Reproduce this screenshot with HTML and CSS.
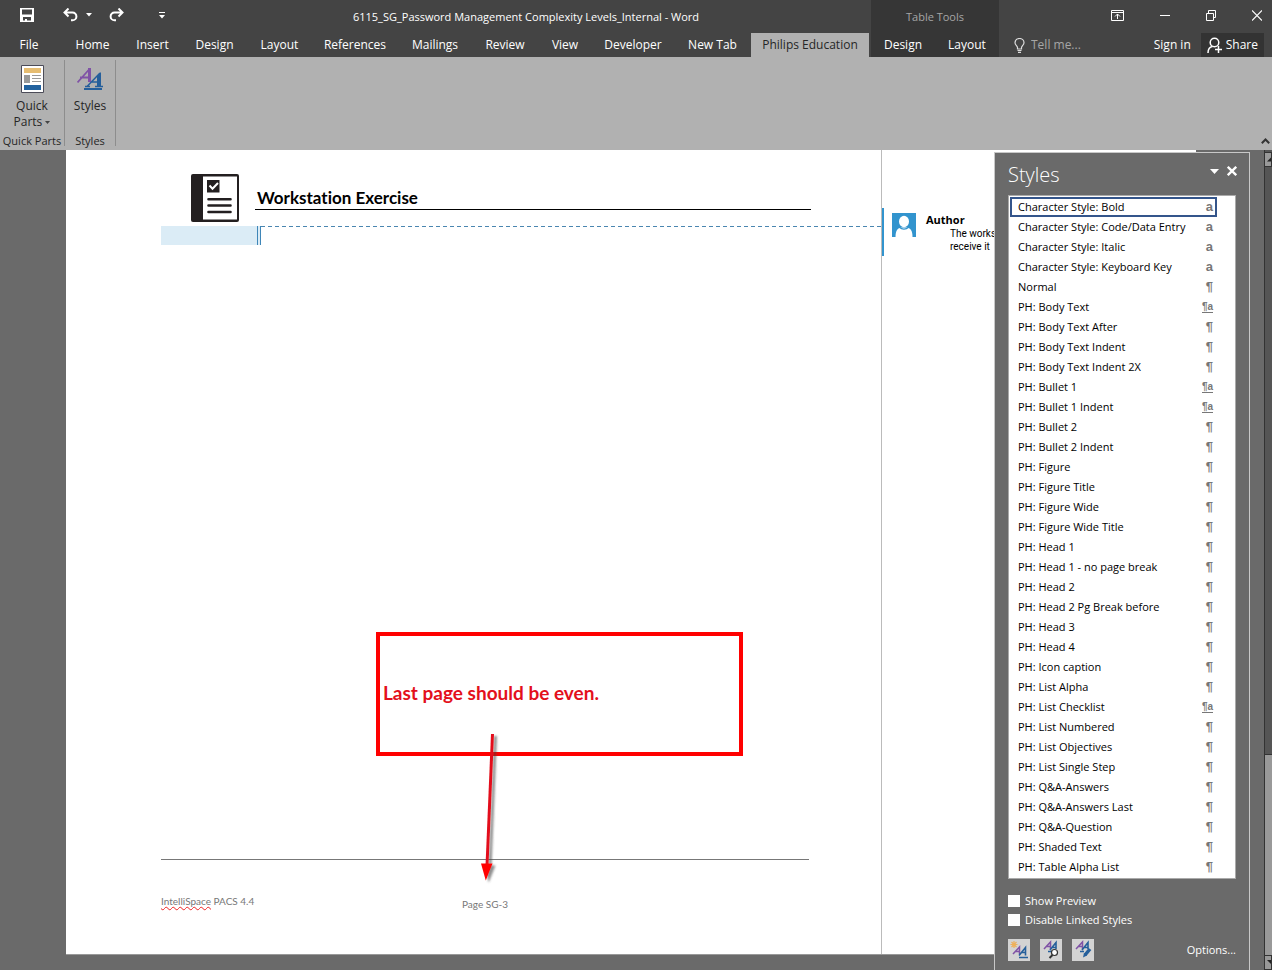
FILE: index.html
```html
<!DOCTYPE html>
<html lang="en">
<head>
<meta charset="utf-8">
<title>6115_SG_Password Management Complexity Levels_Internal - Word</title>
<link rel="stylesheet" href="styles.css">
</head>
<body>
<header class="chrome">
  <div class="chrome-main">
    <div class="titlebar">
      <div class="quick-access">
        <button class="icon-btn" aria-label="Save"><svg width="14" height="14" viewBox="0 0 14 14"><path fill="#fff" fill-rule="evenodd" d="M0 0h14v14H0zM2 1.500v5h10v-5zM3 9v3.500h2V11h2v1.500h4V9z"/></svg></button>
        <button class="icon-btn" aria-label="Undo"><svg width="15" height="14" viewBox="0 0 15 14"><path fill="none" stroke="#fff" stroke-width="2" d="M5.500 .5L1.500 4.500l4 4M2 4.500h7.500a3.800 3.800 0 0 1 0 7.800H8"/></svg></button>
        <button class="icon-btn" aria-label="Undo history"><svg width="6" height="4" viewBox="0 0 6 4"><path fill="#fff" d="M0 0h6L3 3.500z"/></svg></button>
        <button class="icon-btn redo" aria-label="Redo"><svg width="15" height="14" viewBox="0 0 15 14"><path fill="none" stroke="#fff" stroke-width="2" d="M9.500 .5l4 4-4 4M13 4.500H5.500a3.800 3.800 0 0 0 0 7.800H7"/></svg></button>
        <button class="icon-btn customize" aria-label="Customize toolbar"><svg width="6" height="7" viewBox="0 0 6 7"><path fill="#fff" d="M0 0h6v1H0zM0 3h6L3 6.500z"/></svg></button>
      </div>
      <h1 class="doc-title">6115_SG_Password Management Complexity Levels_Internal - Word</h1>
    </div>
    <nav class="tabs">
      <button class="tab file">File</button><button class="tab">Home</button><button class="tab">Insert</button><button class="tab">Design</button><button class="tab">Layout</button><button class="tab">References</button><button class="tab">Mailings</button><button class="tab">Review</button><button class="tab">View</button><button class="tab">Developer</button><button class="tab">New Tab</button><button class="tab active">Philips Education</button>
    </nav>
  </div>
  <div class="context-tools">
    <div class="context-title">Table Tools</div>
    <div class="context-tabs"><button class="tab">Design</button><button class="tab">Layout</button></div>
  </div>
  <div class="chrome-end">
    <div class="window-controls">
      <button class="icon-btn" aria-label="Ribbon display options"><svg width="13" height="11" viewBox="0 0 13 11"><path fill="none" stroke="#fff" d="M.5 .5h12v10H.5zM.5 2.500h12M6.500 9V4M4 6.500L6.500 4 9 6.500"/></svg></button>
      <button class="icon-btn" aria-label="Minimize"><svg width="10" height="11" viewBox="0 0 10 11"><path stroke="#fff" d="M0 5.500h10"/></svg></button>
      <button class="icon-btn" aria-label="Restore"><svg width="10" height="11" viewBox="0 0 10 11"><path fill="none" stroke="#fff" d="M.5 3.500h7v7h-7zM2.500 3V.5h7v7H8"/></svg></button>
      <button class="icon-btn" aria-label="Close"><svg width="10" height="11" viewBox="0 0 10 11"><path stroke="#fff" stroke-width="1.200" d="M0 .5l10 10M10 .5l-10 10"/></svg></button>
    </div>
    <div class="account">
      <label class="tell"><svg width="11" height="15" viewBox="0 0 11 15"><path fill="none" stroke="#ddd" stroke-width="1.200" d="M3.500 11V9.500C3.500 8 1 7 1 4.700a4.500 4.200 0 0 1 9 0C10 7 7.500 8 7.500 9.500V11zM3.500 12.500h4M4 14.300h3"/></svg><input class="tell-input" placeholder="Tell me..." aria-label="Tell me"></label>
      <button class="sign-in">Sign in</button>
      <button class="share"><svg width="16" height="17" viewBox="0 0 16 17"><circle cx="7.500" cy="5.500" r="4.300" fill="none" stroke="#fff" stroke-width="1.500"/><path fill="none" stroke="#fff" stroke-width="1.500" d="M1 16c0-3.500 1.500-6 4.500-6.500M11.500 9v7M8 12.500h7"/></svg>Share</button>
    </div>
  </div>
</header>

<section class="ribbon">
  <div class="group parts">
    <button class="big-btn">
      <svg width="23" height="28" viewBox="0 0 23 28"><path fill="#fff" stroke="#4c4c58" d="M.5 .5h22v27H.5z"/><path fill="#e6bd72" d="M3 3h17v5H3z"/><path fill="#999" d="M3 10h6v8H3z"/><path stroke="#999" d="M11 10.500h9M11 13.500h9M11 16.500h9"/><path fill="#22629f" d="M3 20h17v5H3z"/></svg>
      <span>Quick<br>Parts <svg width="5" height="3" viewBox="0 0 5 3" class="caret"><path fill="#444" d="M0 0h5L2.500 3z"/></svg></span>
    </button>
    <div class="group-label">Quick Parts</div>
  </div>
  <div class="group">
    <button class="big-btn">
      <svg width="26" height="28" viewBox="0 0 26 28"><path fill="none" stroke="#8053a6" stroke-width="1.800" d="M.5 17.500L12.500 4M3 12.500h9"/><path fill="none" stroke="#8053a6" stroke-width="3" d="M12.500 3v14"/><path fill="none" stroke="#255f9b" stroke-width="1.500" d="M8 21.500h5M10 21.500L23 8M14 17h8M18 21.500h8"/><path fill="#255f9b" d="M20 11l4-4v14h-4zM7 23h18v2H7z"/></svg>
      <span>Styles</span>
    </button>
    <div class="group-label">Styles</div>
  </div>
  <button class="collapse" aria-label="Collapse ribbon"><svg width="9" height="6" viewBox="0 0 9 6"><path fill="none" stroke="#333" stroke-width="2" d="M.8 5.200l3.700-3.700 3.700 3.700"/></svg></button>
</section>

<main class="workspace">
  <div class="canvas">
    <article class="page">
      <div class="page-body">
        <div class="heading">
          <svg width="48" height="48" viewBox="0 0 48 48"><rect width="48" height="48" rx="2" fill="#231f20"/><path fill="#fff" d="M12 2.500h34v43H12z"/><path fill="#231f20" d="M16 6h12.500v12.500H16z"/><path fill="none" stroke="#fff" stroke-width="2" d="M18.500 11.500l3 3.200L27 9"/><path stroke="#231f20" stroke-width="2.600" stroke-linecap="round" d="M17.500 25.200h22M17.500 31.500h22M17.500 38h22"/></svg>
          <h2 class="heading-text">Workstation Exercise</h2>
        </div>
        <div class="table-row"><div class="shaded"></div><div class="leader"></div></div>
        <footer class="page-footer"><span><span class="misspelt">IntelliSpace</span> PACS 4.4</span><span class="page-number">Page SG-3</span></footer>
        <div class="callout">Last page should be even.</div>
        <svg class="arrow" width="30" height="156" viewBox="0 0 30 156"><defs><filter id="soft" x="-50%" y="-10%" width="200%" height="120%"><feDropShadow dx="3" dy="2" stdDeviation="1.300" flood-color="#444" flood-opacity=".6"/></filter></defs><g filter="url(#soft)"><path stroke="#e3101c" stroke-width="3" d="M16.500 4L11 136"/><path fill="#f00" d="M5 133.500h11.500L9.800 150.500z"/></g></svg>
      </div>
      <aside class="comments">
        <div class="comment">
          <svg class="avatar" width="24" height="24" viewBox="0 0 24 24"><path fill="#3294ce" d="M0 0h24v24H0z"/><ellipse cx="12" cy="8.500" rx="5" ry="5.700" fill="#fff"/><path fill="#fff" d="M3.500 24c0-6 2-9.500 6-9.500h5c4 0 6 3.500 6 9.500z"/><path fill="none" stroke="#3294ce" stroke-width="1.300" d="M7 14c3 2.500 7 2.500 10 0"/></svg>
          <div><div class="author">Author</div><p class="comment-text">The works<br>receive it</p></div>
        </div>
      </aside>
    </article>
  </div>
  <div class="scrollbar"><button class="scroll-btn" aria-label="Scroll up"><svg width="8" height="5" viewBox="0 0 8 5"><path fill="#222" d="M2 4.500L6.500 0 11 4.500z"/></svg></button><div class="track"></div><div class="thumb"></div><button class="scroll-btn" aria-label="Scroll down"><svg width="8" height="5" viewBox="0 0 8 5"><path fill="#222" d="M2 0h9L6.500 4.500z"/></svg></button></div>

  <aside class="styles-pane">
    <div class="pane-head"><h2 class="pane-title">Styles</h2>
      <button class="icon-btn" aria-label="Pane options"><svg width="9" height="5" viewBox="0 0 9 5"><path fill="#fff" d="M0 0h9L4.500 5z"/></svg></button>
      <button class="icon-btn" aria-label="Close pane"><svg width="10" height="10" viewBox="0 0 10 10"><path stroke="#fff" stroke-width="2.300" d="M.8 .8l8.400 8.400M9.200 .8L.8 9.200"/></svg></button>
    </div>
    <ul class="style-list">
      <li><button class="style selected">Character Style: Bold<b>a</b></button></li>
      <li><button class="style">Character Style: Code/Data Entry<b>a</b></button></li>
      <li><button class="style">Character Style: Italic<b>a</b></button></li>
      <li><button class="style">Character Style: Keyboard Key<b>a</b></button></li>
      <li><button class="style">Normal<b>¶</b></button></li>
      <li><button class="style">PH: Body Text<b class="linked">¶a</b></button></li>
      <li><button class="style">PH: Body Text After<b>¶</b></button></li>
      <li><button class="style">PH: Body Text Indent<b>¶</b></button></li>
      <li><button class="style">PH: Body Text Indent 2X<b>¶</b></button></li>
      <li><button class="style">PH: Bullet 1<b class="linked">¶a</b></button></li>
      <li><button class="style">PH: Bullet 1 Indent<b class="linked">¶a</b></button></li>
      <li><button class="style">PH: Bullet 2<b>¶</b></button></li>
      <li><button class="style">PH: Bullet 2 Indent<b>¶</b></button></li>
      <li><button class="style">PH: Figure<b>¶</b></button></li>
      <li><button class="style">PH: Figure Title<b>¶</b></button></li>
      <li><button class="style">PH: Figure Wide<b>¶</b></button></li>
      <li><button class="style">PH: Figure Wide Title<b>¶</b></button></li>
      <li><button class="style">PH: Head 1<b>¶</b></button></li>
      <li><button class="style">PH: Head 1 - no page break<b>¶</b></button></li>
      <li><button class="style">PH: Head 2<b>¶</b></button></li>
      <li><button class="style">PH: Head 2 Pg Break before<b>¶</b></button></li>
      <li><button class="style">PH: Head 3<b>¶</b></button></li>
      <li><button class="style">PH: Head 4<b>¶</b></button></li>
      <li><button class="style">PH: Icon caption<b>¶</b></button></li>
      <li><button class="style">PH: List Alpha<b>¶</b></button></li>
      <li><button class="style">PH: List Checklist<b class="linked">¶a</b></button></li>
      <li><button class="style">PH: List Numbered<b>¶</b></button></li>
      <li><button class="style">PH: List Objectives<b>¶</b></button></li>
      <li><button class="style">PH: List Single Step<b>¶</b></button></li>
      <li><button class="style">PH: Q&amp;A-Answers<b>¶</b></button></li>
      <li><button class="style">PH: Q&amp;A-Answers Last<b>¶</b></button></li>
      <li><button class="style">PH: Q&amp;A-Question<b>¶</b></button></li>
      <li><button class="style">PH: Shaded Text<b>¶</b></button></li>
      <li><button class="style">PH: Table Alpha List<b>¶</b></button></li>
    </ul>
    <div class="checks">
      <label class="check"><input type="checkbox">Show Preview</label>
      <label class="check"><input type="checkbox">Disable Linked Styles</label>
    </div>
    <div class="pane-actions">
      <button class="tool" aria-label="New style"><svg width="20" height="20" viewBox="0 0 20 20"><path stroke="#eeb05a" stroke-width="1.200" d="M5 1v7M1.500 4.500h7M2.500 2l5 5M7.500 2l-5 5"/><path fill="none" stroke="#8053a6" stroke-width="1.500" d="M4 14l6.500-7v7M6 11.500h4"/><path fill="none" stroke="#255f9b" stroke-width="1.600" d="M10 15.500l6.500-8v8M12.500 12.500h4M10 17.500h9"/></svg></button>
      <button class="tool" aria-label="Style inspector"><svg width="20" height="20" viewBox="0 0 20 20"><path fill="none" stroke="#8053a6" stroke-width="1.500" d="M3 9l6.500-7v7M5 6.500h4"/><path fill="none" stroke="#255f9b" stroke-width="1.600" d="M9 10l6-7.500V9M11 7.500h4M7 11.500h4"/><circle cx="13.500" cy="12.500" r="3" fill="#fff" stroke="#333" stroke-width="1.200"/><path stroke="#333" stroke-width="2" d="M11.500 15l-3 3"/></svg></button>
      <button class="tool" aria-label="Manage styles"><svg width="20" height="20" viewBox="0 0 20 20"><path fill="none" stroke="#8053a6" stroke-width="1.500" d="M3 9l6.500-7v7M5 6.500h4"/><path fill="none" stroke="#255f9b" stroke-width="1.600" d="M9 10l6-7.500V9M11 7.500h4M7 11.500h4"/><path stroke="#255f9b" stroke-width="3.500" d="M17 9l-5 6"/><path fill="#255f9b" d="M11 13l3 2.500-4 2z"/></svg></button>
      <a class="options" href="#options">Options...</a>
    </div>
  </aside>
</main>
</body>
</html>
```
FILE: styles.css
```css
* { box-sizing: border-box; }
body {
  margin: 0;
  min-height: 100vh;
  display: flex;
  flex-direction: column;
  background: #6a6a6a;
  color: #fff;
  font: 12px/16px "Open Sans", "Noto Sans", sans-serif;
  overflow: hidden;
}
button { margin: 0; padding: 0; border: 0; background: none; color: inherit; font: inherit; }
svg { display: block; flex: none; }
h1, h2, p, ul { margin: 0; padding: 0; font-weight: 400; }
ul { list-style: none; }

.chrome { display: grid; grid-template-columns: 871px 128px 1fr; background: #444; }
.titlebar { display: flex; height: 33px; align-items: center; }
.quick-access { display: flex; align-items: center; width: 181px; padding: 0 0 3px 20px; }
.icon-btn { display: flex; align-items: center; justify-content: center; }
.quick-access .icon-btn:nth-child(2) { margin-left: 29px; }
.quick-access .icon-btn:nth-child(3) { margin-left: 8px; }
.redo { margin-left: 17px; }
.customize { margin-left: 35px; }
.doc-title { flex: 1; font-size: 11px; text-align: center; }
.tabs { display: grid; grid-template-columns: 62px 61px 59px 65px 65px 86px 74px 66px 54px 82px 77px 118px; }
.tab { height: 24px; text-align: center; white-space: nowrap; }
.file { padding-right: 4px; }
.active { background: #b1b1b1; color: #262626; }
.context-tools { background: #363636; }
.context-title { height: 33px; line-height: 33px; font-size: 11px; text-align: center; color: #a6a6a6; }
.context-tabs { display: grid; grid-template-columns: 1fr 1fr; }
.window-controls { display: flex; justify-content: flex-end; align-items: center; gap: 36px; height: 33px; padding: 0 10px 3px 0; }
.account { display: flex; align-items: center; height: 24px; }
.tell { display: flex; align-items: center; gap: 6px; flex: 1; min-width: 0; padding-left: 15px; }
.tell-input { width: 80px; padding: 0; border: 0; background: none; color: #fff; font: inherit; }
.tell-input::placeholder { color: #a6a6a6; opacity: 1; }
.sign-in { padding: 0 10px; }
.share { display: flex; align-items: center; gap: 3px; height: 24px; margin-right: 8px; padding: 0 6px; background: #333; }

.ribbon { display: flex; height: 93px; padding-top: 3px; background: #b1b1b1; color: #262626; }
.group { display: flex; flex-direction: column; align-items: center; justify-content: space-between; width: 51px; height: 86px; border-right: 1px solid #8d8d8d; }
.parts { width: 65px; }
.big-btn { display: flex; flex-direction: column; align-items: center; gap: 5px; padding-top: 5px; }
.caret { display: inline-block; vertical-align: middle; }
.group-label { line-height: 10px; white-space: nowrap; font-size: 11px; }
.collapse { align-self: flex-end; margin: 0 2px 6px auto; }

.workspace { position: relative; display: flex; flex: 1; }
.canvas { display: flex; flex: 1; min-width: 0; padding: 0 68px 15px 66px; }
.page { display: flex; flex: 1; background: #fff; color: #000; border-bottom: 1px solid #999; }
.page-body { position: relative; display: flex; flex-direction: column; width: 816px; padding: 24px 70px 0 95px; border-right: 1px solid #bbb; }
.heading { display: flex; gap: 16px; padding-left: 30px; }
.heading-text { flex: 1; height: 36px; padding: 14px 2px 0; border-bottom: 1px solid #000; font: 700 17px/20px Lato, sans-serif; font-variant-ligatures: none; }
.table-row { display: flex; height: 19px; margin: 4px -70px 0 0; }
.shaded { width: 100px; background: #dbecf6; border-right: 4px double #3f86b8; }
.leader { flex: 1; height: 1px; background: repeating-linear-gradient(90deg, #4a86b0 0 4px, transparent 4px 7px); }
.page-footer { display: grid; grid-template-columns: 1fr auto 1fr; margin: auto 2px 0 0; height: 95px; padding-top: 35px; border-top: 1px solid #777; color: #777; font: 10px/13px Lato, sans-serif; }
.misspelt { text-decoration: underline wavy #e22 1px; text-underline-offset: 1px; text-decoration-skip-ink: none; }
.page-number { padding-top: 3px; }
.callout { position: absolute; left: 310px; top: 482px; width: 367px; height: 124px; padding: 45px 3px; border: 4px solid #f00; color: #e3101c; font: 700 19px/24px Lato, sans-serif; }
.arrow { position: absolute; left: 410px; top: 580px; }
.comments { flex: 1; padding-top: 58px; }
.comment { display: flex; gap: 10px; height: 48px; padding: 5px 0 0 8px; border-left: 2px solid #3294ce; }
.author { font-weight: 700; font-size: 11px; line-height: 14px; }
.comment-text { padding-left: 24px; font: 10px/13px Roboto, sans-serif; }

.scrollbar { display: flex; flex-direction: column; width: 8px; padding-top: 2px; background: #555; border-left: 1px solid #333; }
.scroll-btn { display: flex; align-items: center; height: 15px; background: #999; border: 1px solid #333; border-left: 0; overflow: hidden; }
.track { flex: 588; }
.thumb { flex: 200; background: #999; border-top: 1px solid #333; }

.styles-pane { position: absolute; top: 2px; right: 22px; bottom: 0; width: 256px; padding: 10px 13px 0; background: #6a6a6a; border: 1px solid #c8c8c8; border-width: 1px 1px 0; }
.pane-head { display: flex; gap: 8px; height: 32px; margin-right: -1px; align-items: flex-start; }
.pane-head .icon-btn { height: 16px; }
.pane-title { flex: 1; font: 300 20px/24px "Open Sans", "Noto Sans", sans-serif; }
.style-list { padding: 1px 18px 1px 1px; background: #fff; border: 1px solid #aaa; }
.style { display: flex; align-items: center; justify-content: space-between; width: 100%; height: 20px; padding: 0 2px 0 6px; border: 2px solid transparent; color: #000; font-size: 11px; white-space: nowrap; }
.style b { color: #777; font: 700 13px/16px "Liberation Sans", sans-serif; }
.style .linked { font-size: 10px; line-height: 10px; border-bottom: 1px solid #777; }
.selected { border-color: #34558b; }
.checks { display: grid; gap: 3px; padding-top: 14px; }
.check { display: flex; align-items: center; gap: 4px; font-size: 11px; }
.check input { appearance: none; width: 12px; height: 12px; margin: 0 1px 0 0; background: #fff; }
.pane-actions { display: flex; align-items: center; gap: 10px; padding-top: 11px; }
.tool { width: 22px; height: 22px; padding: 1px; background: #d3d3d3; }
.options { margin-left: auto; color: #fff; text-decoration: none; font-size: 11px; }
```
